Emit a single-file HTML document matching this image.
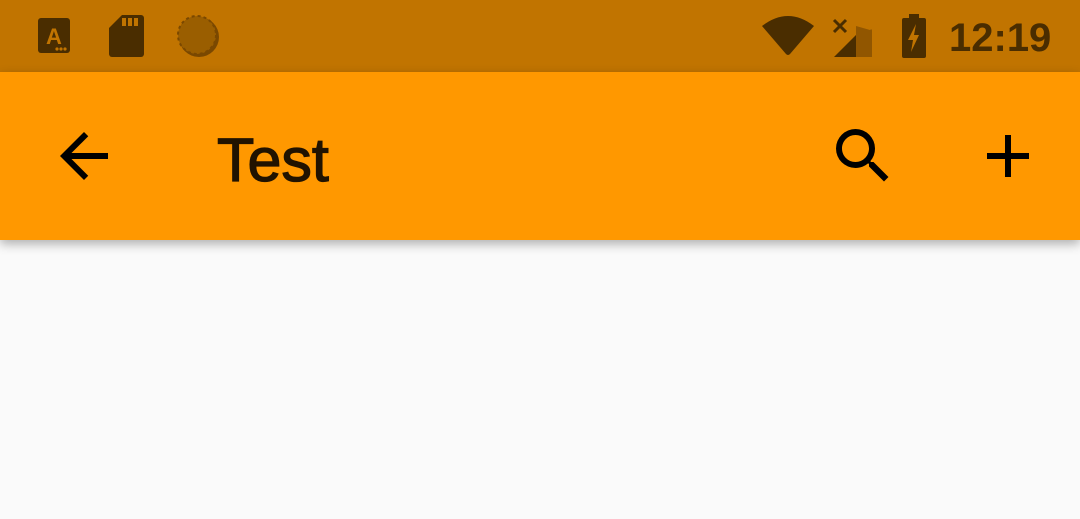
<!DOCTYPE html>
<html><head><style>
body{margin:0;width:1080px;height:519px;background:#fafafa;overflow:hidden;font-family:"Liberation Sans",sans-serif;position:relative}
.sb{position:absolute;left:0;top:0;width:1080px;height:72px;background:#c17400}
.ab{position:absolute;left:0;top:72px;width:1080px;height:168px;background:#ff9800;box-shadow:0 4px 10px rgba(0,0,0,.3)}
.t{position:absolute;left:217px;top:53px;font-size:61px;-webkit-text-stroke:1.3px #211300;color:#211300;line-height:70px}
.clk{position:absolute;left:949px;top:14px;font-size:40px;font-weight:bold;color:#4a2d00;line-height:48px}
svg{position:absolute}
</style></head><body>
<div class="sb">
<svg style="left:36px;top:16px" width="36" height="40" viewBox="0 0 36 40"><rect x="2" y="2" width="32" height="35" rx="3" fill="#4a2d00"/><text x="18" y="28" font-size="22" font-weight="bold" text-anchor="middle" fill="#c17400" font-family="Liberation Sans">A</text><circle cx="21" cy="33" r="1.6" fill="#c17400"/><circle cx="25" cy="33" r="1.6" fill="#c17400"/><circle cx="29" cy="33" r="1.6" fill="#c17400"/></svg>
<svg style="left:108px;top:14px" width="36" height="44" viewBox="0 0 36 44"><path d="M14 1H33a3 3 0 0 1 3 3V40a3 3 0 0 1-3 3H4a3 3 0 0 1-3-3V14Z" fill="#4a2d00"/><rect x="14" y="4" width="4" height="8" fill="#c17400"/><rect x="20" y="4" width="4" height="8" fill="#c17400"/><rect x="26" y="4" width="4" height="8" fill="#c17400"/></svg>
<svg style="left:176px;top:14px" width="46" height="46" viewBox="0 0 46 46"><circle cx="23" cy="23" r="20" fill="#7a4800"/><circle cx="21" cy="21" r="19" fill="#9a5e00" stroke="#7a4800" stroke-width="2" stroke-dasharray="3 3"/></svg>
<svg style="left:760px;top:14px" width="56" height="42" viewBox="0 0 56 42"><path d="M2 12Q28-8 54 12L30 40Q28 42 26 40Z" fill="#4a2d00"/></svg>
<svg style="left:832px;top:14px" width="44" height="44" viewBox="0 0 44 44"><path d="M2 6L14 18M14 6L2 18" stroke="#4a2d00" stroke-width="3"/><path d="M24 12V43H40V17Q40 14 38 16Z" fill="#915600"/><path d="M2 43L24 21V43Z" fill="#4a2d00"/></svg>
<svg style="left:900px;top:14px" width="28" height="46" viewBox="0 0 28 46"><path d="M9 0H19V4H24Q26 4 26 6V42Q26 44 24 44H4Q2 44 2 42V6Q2 4 4 4H9Z" fill="#4a2d00"/><path d="M16 10L8 26H13L11 38L19 21H14Z" fill="#c17400"/></svg>
<div class="clk">12:19</div>
</div>
<div class="ab">
<svg style="left:48px;top:48px" width="72" height="72" viewBox="0 0 24 24"><path d="M20 11H7.83l5.59-5.59L12 4l-8 8 8 8 1.41-1.41L7.83 13H20v-2z" fill="#000"/></svg>
<div class="t">Test</div>
<svg style="left:827px;top:48px" width="72" height="72" viewBox="0 0 24 24"><path d="M15.5 14h-.79l-.28-.27A6.470 6.470 0 0 0 16 9.5 6.5 6.5 0 1 0 9.5 16c1.61 0 3.090-.59 4.230-1.57l.27.28v.79l5 4.99L20.49 19l-4.99-5zm-6 0C7.01 14 5 11.99 5 9.5S7.010 5 9.5 5 14 7.010 14 9.5 11.99 14 9.5 14z" fill="#000"/></svg>
<svg style="left:972px;top:48px" width="72" height="72" viewBox="0 0 24 24"><path d="M19 13h-6v6h-2v-6H5v-2h6V5h2v6h6v2z" fill="#000"/></svg>
</div>
</body></html>
